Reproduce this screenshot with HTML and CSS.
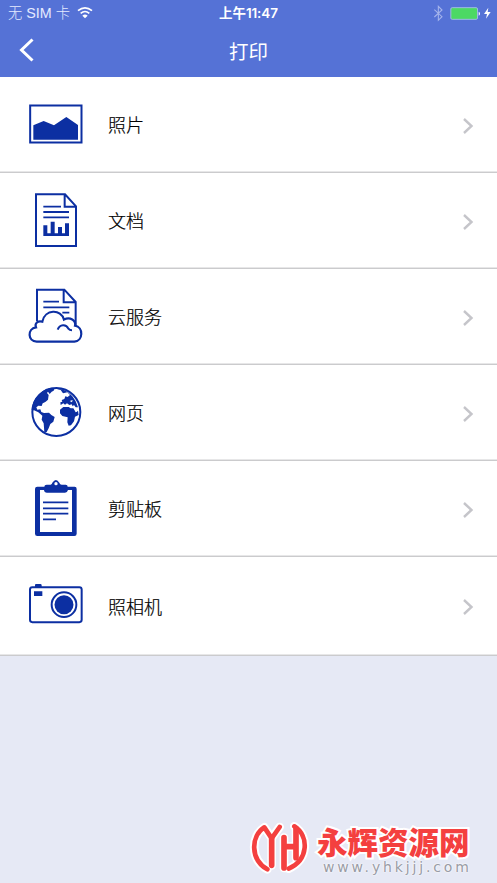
FILE: index.html
```html
<!DOCTYPE html>
<html lang="zh-CN">
<head>
<meta charset="utf-8">
<title>打印</title>
<link rel="stylesheet" href="styles.css">
</head>
<body>
<header class="header">
  <div class="status">
    <div class="carrier"><span>无 SIM 卡</span>
      <svg class="wifi" width="16" height="14" viewBox="0 0 48 42"><path d="M3 14Q24-3 45 14M11 22Q24 11 37 22" fill="none" stroke="#fff" stroke-width="5"/><path d="M16 29Q24 22 32 29L24 37Z" fill="#fff"/></svg>
    </div>
    <time class="time">上午11:47</time>
    <div class="power">
      <svg width="60" height="20" viewBox="0 0 180 60"><path d="M4 20L27 41L16 52V10L27 21L4 42" fill="none" stroke="#a5b4ec" stroke-width="3.2"/><rect x="53.500" y="14" width="80" height="35" rx="4" fill="#4cd964" stroke="#9db9e5" stroke-width="3"/><path d="M137 26Q141 27 141 32T137 38Z" fill="#fff"/><path d="M166 14L153 33H162L159 47L173 27H164Z" fill="#fff"/></svg>
    </div>
  </div>
  <nav class="nav">
    <svg class="back" width="16" height="26" viewBox="0 0 16 26"><path d="M13.500 2.500L2.500 13L13.500 23.500" fill="none" stroke="#fff" stroke-width="3"/></svg>
    <h1 class="title">打印</h1>
  </nav>
</header>
<main class="list">
  <a class="row">
    <svg class="icon" viewBox="24 -3 168 210"><rect class="line" x="30.500" y="46.500" width="154" height="111"/><path class="solid" d="M40 106L71 93L102 106L139 81L174 105V149H40Z"/></svg>
    <span class="label">照片</span><svg class="chevron" viewBox="0 0 12 18"><path d="M2 2L9.500 9L2 16"/></svg>
  </a>
  <a class="row">
    <svg class="icon" viewBox="24 0 168 210"><path class="line" d="M48 28H135L168 64V183H48ZM134 29V65H168"/><path class="bar" d="M70 65H123M70 81H147M70 97H147"/><path class="solid" d="M70 153V121H82V145H92V110H104V145H114V126H126V145H135V115H147V153Z"/></svg>
    <span class="label">文档</span><svg class="chevron" viewBox="0 0 12 18"><path d="M2 2L9.500 9L2 16"/></svg>
  </a>
  <a class="row">
    <svg class="icon" viewBox="24 3 168 210"><path class="line" d="M51 124V29H133L167 66V145M131 30V67H166"/><path class="bar" d="M70 65H117M70 82H148M127 98H148"/><path class="cloud" d="M50 185C23 184 21 146 48 142C43 130 54 121 67 125C74 87 124 86 132 119C150 109 169 122 165 137C191 142 190 182 163 185Z"/><path class="line" d="M113 149C119 132 139 132 145 146Q149 151 156 151"/></svg>
    <span class="label">云服务</span><svg class="chevron" viewBox="0 0 12 18"><path d="M2 2L9.500 9L2 16"/></svg>
  </a>
  <a class="row">
    <svg class="icon" viewBox="24 -9 168 210"><circle class="line" cx="109" cy="96" r="72"/><g transform="translate(18 6)"><path class="solid" d="M17 84Q20 43 62 20L69 25L63 33L68 39L66 53L58 60L50 64L47 72L37 71L31 76L34 83L43 82L46 90L54 93L69 92L76 99L86 105L82 119L73 126L68 139L62 150L55 150L53 124L47 113L49 101L37 91L24 85ZM65 20Q75 16 86 18L83 26L77 29L71 36L66 29ZM91 20Q120 19 139 43Q151 57 156 76L149 76L144 69L140 73L137 67L130 69L123 64L117 68L112 64L104 69L103 61L109 59L107 54L115 51L118 43L125 45L132 39L124 31L111 34L104 24ZM102 83L112 75L128 75L134 79L144 79L151 90L156 86L158 99L147 104L144 118L135 130L128 131L124 121L125 106L109 102L102 94Z"/><path d="M131 57L140 54L138 61ZM119 36L114 42L112 37ZM142 78L147 76L154 88L149 91Z" fill="#fff"/></g></svg>
    <span class="label">网页</span><svg class="chevron" viewBox="0 0 12 18"><path d="M2 2L9.500 9L2 16"/></svg>
  </a>
  <a class="row">
    <svg class="icon" viewBox="24 0 168 210"><path class="solid" fill-rule="evenodd" d="M52 41H73Q73 35 80 35H92Q96 33 97 29Q108 13 118 29Q120 35 125 35H137Q143 35 143 41H164Q170 41 170 48V182Q170 189 163 189H52Q45 189 45 182V48Q45 41 52 41ZM60 51V177H156V51H144Q142 59 135 59H81Q73 59 72 51ZM108 27A5 5 0 1 0 108 37A5 5 0 1 0 108 27Z"/><path class="bar" d="M69 88H145M69 106H145M69 122H145M69 139H108"/></svg>
    <span class="label">剪贴板</span><svg class="chevron" viewBox="0 0 12 18"><path d="M2 2L9.500 9L2 16"/></svg>
  </a>
  <a class="row last">
    <svg class="icon" viewBox="24 -18 168 210"><rect class="line" x="30" y="36.500" width="155" height="105" rx="7"/><path class="solid" d="M45 36V30Q45 27 48 27H61Q65 27 65 31V36ZM42 49H67V63H42Z"/><circle class="line" cx="132" cy="89" r="37"/><circle class="solid" cx="132" cy="89" r="28.500"/></svg>
    <span class="label">照相机</span><svg class="chevron" viewBox="0 0 12 18"><path d="M2 2L9.500 9L2 16"/></svg>
  </a>
</main>
<footer class="brand">
  <svg class="logo" width="66" height="62" viewBox="0 0 198 186"><g id="mark" fill="none" stroke-linejoin="round" stroke-linecap="round"><g stroke="#fff" stroke-width="26"><path d="M64 160C12 130 14 60 55 34L77 66L101 33M77 66V148M114 65V156M114 92H150M150 36V126M145 31C190 60 188 132 128 158"/></g><g stroke="#f4403f"><path stroke-width="14" d="M64 160C12 130 14 60 55 34L77 67L101 33M145 31C190 60 188 132 128 158"/><path stroke-width="17" d="M77 68V148M114 65V156M150 38V125M114 92H150"/></g></g></svg>
  <div class="words"><div class="name">永辉资源网</div><div class="url">www.yhkjjj.com</div></div>
</footer>
</body>
</html>
```
FILE: styles.css
```css
* { box-sizing: border-box; }
body {
  margin: 0;
  height: 883px;
  display: flex;
  flex-direction: column;
  overflow: hidden;
  background: #e6e9f5;
  font-family: "Liberation Sans", "Noto Sans CJK SC", sans-serif;
}
.header { height: 77px; background: #5572d6; color: #fff; }
.status {
  height: 26px;
  display: grid;
  grid-template-columns: 1fr auto 1fr;
  align-items: center;
  padding: 0 4px 0 8px;
}
.carrier {
  display: flex;
  align-items: center;
  gap: 7px;
  font-size: 14.300px;
  line-height: 26px;
  color: #e5eaff;
  font-weight: 300;
}
.wifi { margin-bottom: 1px; }
.time {
  font-family: Inter, "Noto Sans CJK SC", sans-serif;
  font-size: 13.500px;
  font-weight: 600;
  letter-spacing: -.1px;
  line-height: 26px;
  margin-right: 4px;
}
.power { display: flex; justify-content: flex-end; }
.nav {
  height: 51px;
  display: grid;
  grid-template-columns: 60px 1fr 60px;
  align-items: center;
}
.back { margin: 0 0 3px 19px; }
.title {
  margin: 0;
  text-align: center;
  font-size: 19.500px;
  font-weight: 400;
  line-height: 50px;
}
.list { background: #fff; }
.row {
  height: 96px;
  display: flex;
  align-items: center;
  padding: 0 23px 0 28px;
  border-bottom: 1px solid #cbcbcd;
  box-shadow: inset 0 -1px #e7e7e8;
}
.row.last { height: 99px; }
.icon { width: 56px; height: 70px; margin-top: 12px; align-self: flex-start; }
.label {
  flex: 1;
  margin: 3px 0 0 24px;
  font-size: 18px;
  line-height: 28px;
  color: #000;
  font-weight: 300;
  -webkit-text-stroke: .2px #000;
}
.chevron { width: 12px; height: 18px; margin-top: 2px; }
.chevron path { fill: none; stroke: #c5c5ca; stroke-width: 2.400; }
.line { fill: none; stroke: #0c2fa2; stroke-width: 6; }
.bar { fill: none; stroke: #0c2fa2; stroke-width: 5.500; }
.solid { fill: #0c2fa2; }
.cloud { fill: #fff; stroke: #0c2fa2; stroke-width: 6.500; }
.brand {
  margin-top: auto;
  height: 67px;
  display: flex;
  align-items: flex-start;
  padding-left: 246px;
}
.words { margin: 7px 0 0 5px; }
.name {
  font-size: 30.500px;
  font-weight: 900;
  line-height: 40px;
  color: #f4403f;
  -webkit-text-stroke: 4px #fff;
  paint-order: stroke fill;
  white-space: nowrap;
}
.url {
  margin: -4px 0 0 6px;
  font-family: "DejaVu Sans", sans-serif;
  font-size: 14px;
  line-height: 17px;
  letter-spacing: 2.850px;
  color: #999ca5;
  text-shadow: 0 0 2px #fff, 0 0 2px #fff;
}
```
